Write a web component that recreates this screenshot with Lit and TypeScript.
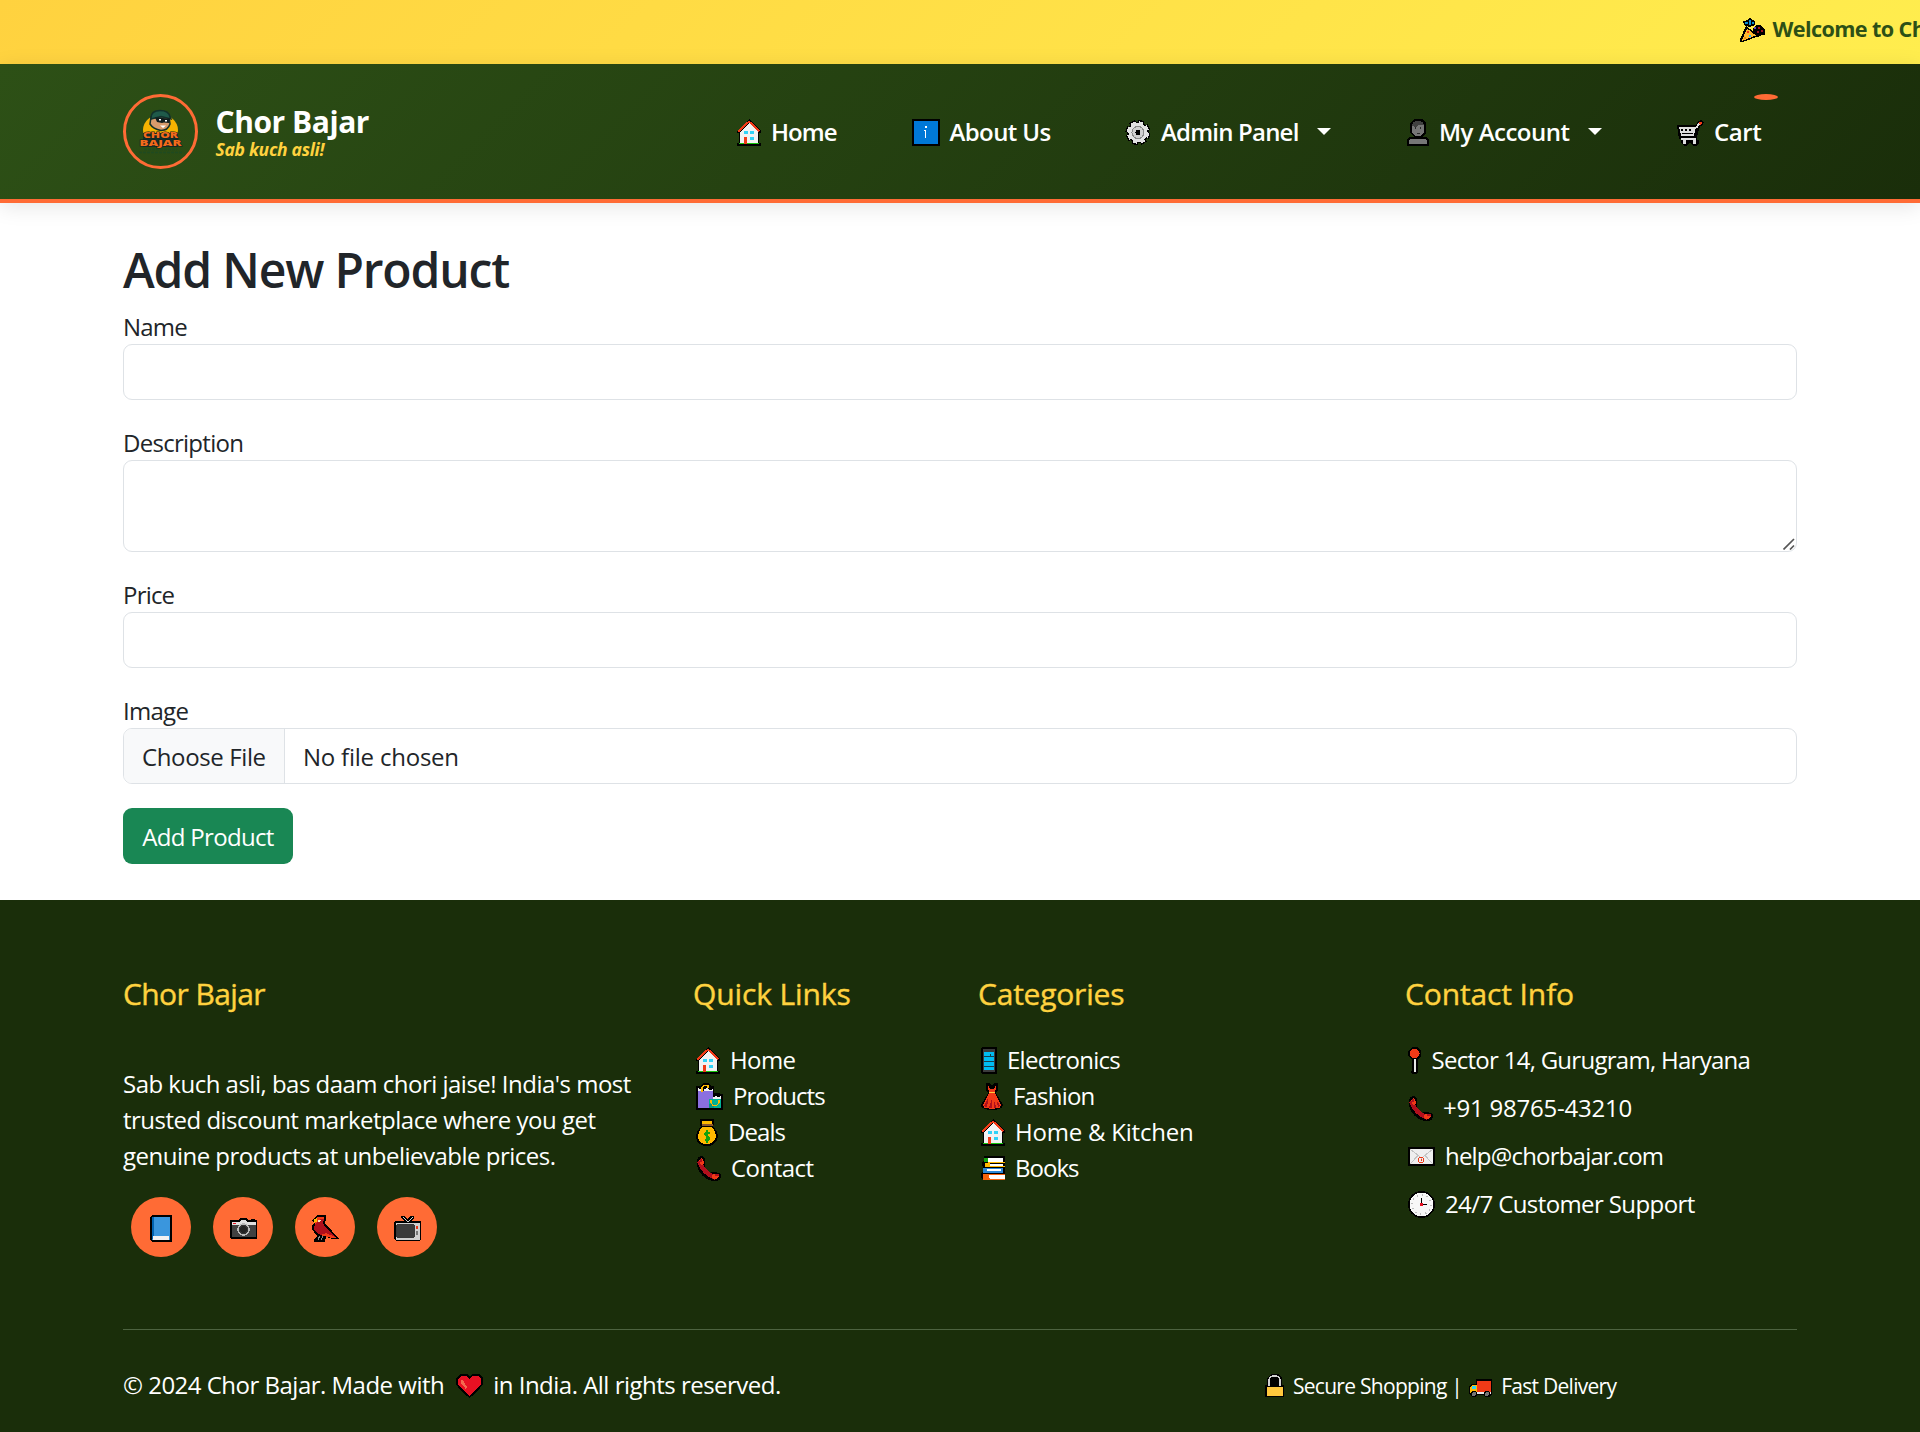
import { LitElement, html, svg, css, type TemplateResult, type SVGTemplateResult } from "lit";
import { customElement } from "lit/decorators.js";

type Glyph = { w: number; h: number; art: SVGTemplateResult };
type Row = { icon: string; text: string; track: string };

const house = svg`
  <path d="M12 0L24 12V14H22V24H24V27H0V24H2V14H0V12Z" fill="#000"/>
  <path d="M12 4L21 13V24H3V13Z" fill="#f2f2f2"/>
  <path d="M1.5 12.5L12 2.5L22.5 12.5" fill="none" stroke="#f03a17" stroke-width="2"/>
  <path d="M7 11.5h3.5v3H7zM13 11.5h4v3h-4zM13 18h4v3h-4z" fill="#31d2f7"/>
  <path d="M2 24h20v1.3H2z" fill="#16c60c"/><path d="M7 17.5h3.4V25H7z" fill="#f03a17"/>`;

const handset = svg`
  <path d="M1 4Q2 0 6 0Q9 1 9 4V8Q10 11 8 12Q11 17 14 18Q16 15 19 16L25 18V21Q24 25 19 25Q9 25 3 15Q0 9 1 4Z" fill="#000"/>
  <path d="M3 5Q8 18 20 22" fill="none" stroke="#b00f1c" stroke-width="4.5"/>
  <path d="M3 4L6 2L7.5 5V8L5 9.5Z" fill="#f03a17"/>
  <path d="M15.5 20L18 18L23.5 19L21 23H17Z" fill="#f03a17"/>
  <path d="M4 3h2v3H4zM19 17.6l4 1v1.5h-4z" fill="#b00f1c"/>`;

const GLYPHS: Record<string, Glyph> = {
  home: { w: 24, h: 27, art: house },
  phone: { w: 25, h: 25, art: handset },
  party: { w: 25, h: 25, art: svg`
    <path d="M6 9L19 19L3 25H0V22Z" fill="#000"/><path d="M7 11.5L16 18.5L3 23.5H2Z" fill="#ffb92e"/>
    <path d="M3 4L8 3L10 0L12 3L15 4V8L9 10L4 8Z" fill="#000"/><path d="M5 5h3v2H5zM9 2.5h2v5H9zM12 5h2v2h-2z" fill="#0a8fd6"/>
    <path d="M13 11L17 8H20L25 13V18H22L18 20L13 16Z" fill="#000"/><path d="M18 10h2v2h-2zM21 13h2v2h-2zM17 14h2v2h-2z" fill="#a4161f"/>
    <path d="M14 10h2v2h-2z" fill="#5b4bc4"/><path d="M7 14h2v2H7z" fill="#f03a17"/><path d="M9 18h2v2H9z" fill="#31b6f7"/><path d="M4 20h2v2H4z" fill="#e88e10"/>` },
  info: { w: 27.5, h: 27, art: svg`
    <path d="M0 0h27.5v27H0z" fill="#000"/><path d="M2 2h23.5v23H2z" fill="#0078d7"/>
    <path d="M13 7h1.6v1.6H13zM12 11h2.4v7.5H13V12h-1z" fill="#fff"/>` },
  gear: { w: 26, h: 25, art: svg`
    <circle cx="13" cy="12.5" r="10.8" fill="#000"/><circle cx="13" cy="12.5" r="10.9" fill="none" stroke="#000" stroke-width="3.4" stroke-dasharray="5.8 2.76"/>
    <circle cx="13" cy="12.5" r="9.6" fill="#e2e2e2"/><circle cx="13" cy="12.5" r="10" fill="none" stroke="#e2e2e2" stroke-width="2.4" stroke-dasharray="4.6 3.25" stroke-dashoffset="-.6"/>
    <circle cx="13" cy="12.5" r="6" fill="#d0d0d0" stroke="#8a8a8a" stroke-width="1"/><circle cx="13" cy="12.5" r="2.5" fill="#000"/>` },
  person: { w: 22, h: 27, art: svg`
    <path d="M7 0H15L19 4V14L15 18H19L22 20V27H0V20L3 18H8L3 14V4Z" fill="#000"/>
    <path d="M5 6H17V13L14 17H8L5 13ZM2 21L4 19.5H18L20 21V25H2Z" fill="#767676"/>
    <path d="M5 7L6 3L11 1.6L16 3L17 6H11L9 8Z" fill="#414141"/><path d="M8 8h1.3v2.2H8zM13 8h1.3v2.2H13zM9.5 13.5h3.5v1H9.5z" fill="#2b2b2b"/>` },
  cart: { w: 27, h: 26, art: svg`
    <path d="M0 5H19L21 1L24 0L27 2L26 5L23 6L20 17V20H22V23L19 26H16L14 23H12L10 26H7L4 23V19H2Z" fill="#000"/>
    <path d="M2 6.5H19L17 15.500H4Z" fill="#dedede"/><path d="M4 8.500h2v2H4zM8 8.500h2v2H8zM12 8.500h2v2h-2zM5 12.500h11v1H5z" fill="#000"/>
    <path d="M19 8L22.500 3M3.500 18.500H19" stroke="#dedede" stroke-width="2"/><path d="M6 20h3v4H6zM15.500 20h3v4h-3z" fill="#dedede"/><path d="M22 2h3v2l-2 1z" fill="#f03a17"/>` },
  bags: { w: 27, h: 27, art: svg`
    <path d="M0 3H4L7 0H12L15 3H18V10H20L27 11V27H0Z" fill="#000"/><path d="M2 8H17V25H2Z" fill="#8b6fe0"/>
    <path d="M2 5l2 1.5 2-1.5v3H2zM8 6.5L11 5l3 2 3-1v2H8z" fill="#f2f2f2"/><path d="M6 9V4Q8 1.8 12 2.6V5" fill="none" stroke="#ffb900" stroke-width="1.2"/>
    <path d="M12.5 16H25V25H12.5Z" fill="#00b294"/><path d="M17 14l3-1 2 1 3-1v3h-8z" fill="#f2f2f2"/><path d="M12.5 21h5v4h-5z" fill="#0a9480"/>
    <path d="M15 17V20Q19 26 23 20V17" fill="none" stroke="#ffb900" stroke-width="1.2"/>` },
  money: { w: 22, h: 27, art: svg`
    <path d="M4 0H18V5L17 8Q22 12 22 18Q20 27 11 27Q1 27 0 18Q0 12 5 8L4 5Z" fill="#000"/>
    <path d="M6 2H16V5H6ZM6 8H16Q20 13 20 18Q18 25 11 25Q3 25 2 18Q2 13 6 8Z" fill="#ffb900"/><path d="M6 5h10.500v2.400H6z" fill="#8e562e"/>
    <path d="M13.500 13.500H10Q7.500 15.500 11 17Q15 19 12 21H8.500M11 11V23.500" fill="none" stroke="#13a10e" stroke-width="2"/>` },
  mobile: { w: 16, h: 27, art: svg`
    <path d="M1 0h14l1 1v25l-1 1H1l-1-1V1z" fill="#000"/><path d="M2 2h12v23H2z" fill="#3b3b3b"/><path d="M3 5h10v17.500H3z" fill="#00bcf2"/>
    <path d="M3 9h10v1.200H3zM3 13.800h10V15H3zM3 18.500h10v1.200H3zM9 6.500h1.200V9H9z" fill="#17414d"/>` },
  dress: { w: 22, h: 27, art: svg`
    <path d="M5 0H9L11 3L13 0H17V7L15 10L22 22L21 25L14 27H8L1 25L0 22L7 10L5 7Z" fill="#000"/>
    <path d="M7 1.500L8.500 5L11 6.500L13.500 5L15 1.500V6L13.600 9.500L20 22L19 24.500L14 25.500H8L3 24.500L2 22L8.400 9.500L7 6Z" fill="#f03a17"/>
    <path d="M7.500 14L3 23L6 24.500ZM10.500 17V25H8ZM13 17V25H15.500ZM15.500 17L19 23L17 24.500Z" fill="#b00f1c"/><path d="M8 9h6v1.300H8z" fill="#ffc83d"/>` },
  books: { w: 24, h: 24, art: svg`
    <path d="M3 0H24V24H2L0 22V17L2 15V10H1V6L3 5Z" fill="#000"/><path d="M3 1.500H7V6H3Z" fill="#13a10e"/><path d="M7 1.500H22V6H7ZM9 7.500H22V10H9Z" fill="#fff"/>
    <path d="M7 6H24V7.300H7ZM7 9.800H24V11H7ZM4 6.500H9V11H4Z" fill="#ffb900"/><path d="M2 11.500H22V16.500H2Z" fill="#2b88d8"/><path d="M6 12.800H20V15.300H6Z" fill="#fff"/>
    <path d="M1.500 17.500H24V24H2Z" fill="#f7630c"/><path d="M9 18.500H24V22.500H9L7.500 20.500Z" fill="#fff"/>` },
  pin: { w: 13.5, h: 27, art: svg`
    <path d="M4 0H9.500L13 4V9L10 12.500V23L10.500 26L8 27H5L3 26L4 23V12.500L0 9V4Z" fill="#000"/>
    <circle cx="6.600" cy="6.500" r="5" fill="#f03a17"/><path d="M5.600 12h2.500v13H5.600z" fill="#e6e6e6"/>` },
  mail: { w: 27, h: 19, art: svg`
    <path d="M0 0h27v19H0z" fill="#000"/><path d="M2 2h23v15H2z" fill="#efefef"/>
    <path d="M2 2L13.500 11L25 2M2 17L10 8.500M25 17L17 8.500" fill="none" stroke="#c4c4c4" stroke-width="1"/>
    <circle cx="13" cy="13" r="2.800" fill="none" stroke="#f03a17" stroke-width="1"/><path d="M12.500 12h1.500v2h-1.500z" fill="#f03a17"/>` },
  clock: { w: 27, h: 27, art: svg`
    <circle cx="13.500" cy="13.500" r="13.500" fill="#000"/><circle cx="13.500" cy="13.500" r="11.800" fill="#f7f7f7"/>
    <circle cx="13.500" cy="13.500" r="9.600" fill="none" stroke="#bdbdbd" stroke-width="1.600" stroke-dasharray="1.200 3.826"/>
    <path d="M13 7h1.200v6H13zM15 13h4v1.200h-4z" fill="#000"/><path d="M12 12h3v3h-3z" fill="#e81123"/>` },
  book: { w: 22, h: 27, art: svg`
    <path d="M2 0H22V27H2L0 25V2Z" fill="#000"/><path d="M2 2H20V25H2Z" fill="#3a96dd"/><path d="M2 2H4V23L2 24Z" fill="#0063b1"/><path d="M3 21H19V25H3Z" fill="#f2f2f2"/>` },
  camera: { w: 27, h: 21, art: svg`
    <path d="M0 2H9L10 0H17L18 2H20L21 1H24L25 2H27V20L26 21H1L0 20Z" fill="#000"/><path d="M1.500 4H25.500V19H1.500Z" fill="#414141"/>
    <path d="M1.500 3.500H10L11 2H16L17 3.500H25.500V6.500H1.500Z" fill="#e0e0e0"/><circle cx="13.500" cy="11.500" r="5.600" fill="#333" stroke="#b8b8b8" stroke-width="1.300"/>
    <circle cx="13.500" cy="11.500" r="3.200" fill="#222"/><path d="M3 5h2.500v1.200H3z" fill="#e81123"/>` },
  bird: { w: 27, h: 27, art: svg`
    <path d="M5 0H14V5L13 8L27 24H20L14 22L13 27H2V24L5 21L0 14V10L2 8L0 6Z" fill="#000"/>
    <path d="M6 2H12.500L11 8L12 10L23 22H17L6 19L2 14L3 9L6 7Z" fill="#b00f1c"/><path d="M6 1.500H12.500L12 4L8 4L5 7L4 9H3L4 4ZM14 18L24 22.500H18L8 20Z" fill="#f03a17"/>
    <path d="M2 4.500L4.500 3V7L2 8Z" fill="#ffb900"/><path d="M6 4.500h3L8 7H6z" fill="#f7e3c0"/><path d="M7.500 21L6 25M11 21L9 25" stroke="#8a8a8a" stroke-width="1.200"/>` },
  tv: { w: 27, h: 25, art: svg`
    <path d="M7 0L10 0L13.500 3L17 0H20V2L17 5H26L27 6V23L25 25H2L0 23V6L1 5H10L7 2Z" fill="#000"/><path d="M1.500 6.500H25.500V23.500H1.500Z" fill="#d0d0d0"/>
    <path d="M9 1L14 6L19 1" fill="none" stroke="#d0d0d0" stroke-width="1.200"/><path d="M2.500 8.500H20V21H2.500Z" fill="#3b3b3b" stroke="#111" stroke-width=".8"/>
    <path d="M21.500 9.500h2.500v3h-2.500z" fill="#e8371a"/><path d="M21.500 15h2.500v3.500h-2.500z" fill="#767676"/>` },
  heart: { w: 27, h: 24, art: svg`
    <path d="M4 0H11L13.500 2.500L16 0H23L27 4V10L22 17L13.500 24L5 17L0 10V4Z" fill="#000"/>
    <path d="M5 2H10L13.500 5L17 2H22L25 5V10L20 16L13.500 22L7 16L2 10V5Z" fill="#e81123"/><path d="M4.500 5.500L7 6.500L11 13L9.500 14.500L5 9Z" fill="#f4694f"/>` },
  lock: { w: 19, h: 23, art: svg`
    <path d="M6 0H13L17 4V11H19V23H0V11H2V4Z" fill="#000"/><path d="M4 12V6Q4.500 2 9.500 2Q14.500 2 15 6V12" fill="#000" stroke="#d0d0d0" stroke-width="1.500"/>
    <path d="M1.500 12.500H17.500V21.500H1.500Z" fill="#ffc83d"/>` },
  truck: { w: 23, h: 18, art: svg`
    <path d="M7 0H23V16L20 18H16L15 16H8L6 18H3L0 15V8L2 5H7Z" fill="#000"/><path d="M8 1.500H22V13H8Z" fill="#f03a17"/>
    <path d="M1 9L3 6H8V14H1Z" fill="#ffb900"/><path d="M3.500 6.500H7V10H2.500Z" fill="#31d2f7"/><path d="M8 13H22V14.800H8Z" fill="#e6e6e6"/>
    <circle cx="5" cy="15" r="2.500" fill="#767676" stroke="#000"/><circle cx="18" cy="15" r="2.500" fill="#767676" stroke="#000"/>` },
};

const glyph = (name: string): TemplateResult => {
  const g = GLYPHS[name];
  return html`<svg class="glyph" width=${g.w} height=${g.h} viewBox="0 0 ${g.w} ${g.h}" shape-rendering="crispEdges" aria-hidden="true">${g.art}</svg>`;
};

const NAV: (Row & { caret?: boolean })[] = [
  { icon: "home", text: "Home", track: "t9" },
  { icon: "info", text: "About Us", track: "t6" },
  { icon: "gear", text: "Admin Panel", track: "t8", caret: true },
  { icon: "person", text: "My Account", track: "t5", caret: true },
  { icon: "cart", text: "Cart", track: "t4" },
];
const LINKS: Row[] = [
  { icon: "home", text: "Home", track: "t6" },
  { icon: "bags", text: "Products", track: "t10" },
  { icon: "money", text: "Deals", track: "t9" },
  { icon: "phone", text: "Contact", track: "t5" },
];
const CATEGORIES: Row[] = [
  { icon: "mobile", text: "Electronics", track: "t7" },
  { icon: "dress", text: "Fashion", track: "t8" },
  { icon: "home", text: "Home & Kitchen", track: "t2" },
  { icon: "books", text: "Books", track: "t10" },
];
const CONTACT: Row[] = [
  { icon: "pin", text: "Sector 14, Gurugram, Haryana", track: "t7" },
  { icon: "phone", text: "+91 98765-43210", track: "t2" },
  { icon: "mail", text: "help@chorbajar.com", track: "t8" },
  { icon: "clock", text: "24/7 Customer Support", track: "t6" },
];
const SOCIAL = ["book", "camera", "bird", "tv"];

@customElement("app-root")
export class AppRoot extends LitElement {
  static styles = css`
    :host { display: block; height: 1432px; overflow: hidden; background: #fff; color: #212529;
      font: 400 24px/36px "Open Sans", "Noto Sans", sans-serif; }
    * { box-sizing: border-box; }
    h1, h2, p, ul { margin: 0; padding: 0; list-style: none; }
    .glyph { display: block; flex: none; }
    .t1 { letter-spacing: -.12px; } .t2 { letter-spacing: -.22px; } .t4 { letter-spacing: -.4px; }
    .t5 { letter-spacing: -.51px; } .t6 { letter-spacing: -.6px; } .t7 { letter-spacing: -.72px; }
    .t8 { letter-spacing: -.8px; } .t9 { letter-spacing: -.95px; } .t10 { letter-spacing: -1px; }

    .banner { height: 64px; padding-top: 13px; overflow: hidden; background: linear-gradient(135deg, #ffd23f, #ffed4e); }
    .ticker { display: flex; align-items: center; gap: 7.5px; padding-left: 1740px; white-space: nowrap;
      font: 700 21.6px/32px "Open Sans", sans-serif; letter-spacing: -.6px; color: #2d5016; }
    .ticker .glyph { margin-top: 1px; }

    .bar { position: relative; display: flex; align-items: center; justify-content: space-between; height: 139px; padding: 0 123px;
      background: linear-gradient(135deg, #2d5016, #1a2e0a); border-bottom: 4px solid #ff6b35; box-shadow: 0 4px 20px rgba(0, 0, 0, .1); }
    .brand { display: flex; align-items: center; gap: 17.5px; }
    .crest { width: 75px; height: 75px; border: 3px solid #ff6b35; border-radius: 50%; }
    .crest svg { display: block; width: 69px; height: 69px; }
    .names { margin-top: 4px; }
    .name { font-weight: 700; font-size: 30px; line-height: 31px; letter-spacing: -.45px; color: #fff; }
    .motto { font-weight: 700; font-style: italic; font-size: 17.5px; line-height: 24px; letter-spacing: -.29px; color: #ffd23f; }
    nav { display: grid; grid-template-columns: 175px 213px 282px 270px 120px; }
    .item { position: relative; display: flex; align-items: center; height: 36px; color: #fff; font-weight: 600; white-space: nowrap; }
    .item .glyph { margin: 2px 10px 0 0; }
    .caret { margin: 0 0 1px 18.5px; border: 7px solid transparent; border-top-color: #fff; border-bottom: 0; }
    .badge { position: absolute; left: 77px; top: -20px; width: 24px; height: 6px; border-radius: 50%; background: #ff6b35; }

    main { height: 697px; padding: 38px 123px 0; }
    h1 { font-size: 48px; line-height: 58px; font-weight: 600; letter-spacing: -1.17px; margin-bottom: 9px; }
    .field { margin-bottom: 24px; }
    label { display: block; height: 36px; padding-top: 1px; line-height: 35px; }
    .control { display: block; width: 100%; height: 56px; margin: 0; padding: 9px 18px; font: inherit; color: inherit;
      background: #fff; border: 1px solid #dee2e6; border-radius: 9px; outline: 0; }
    .area { position: relative; }
    textarea.control { height: 92px; resize: none; }
    .grip { position: absolute; right: 2px; bottom: 2px; }
    .file { display: flex; padding: 0; overflow: hidden; }
    .file span { padding: 10px 18px 0; line-height: 35px; white-space: nowrap; }
    .file .pick { width: 161px; background: #f8f9fa; border-right: 1px solid #dee2e6; letter-spacing: -.38px; }
    .submit { display: block; width: 170px; height: 56px; padding: 1px 0 0; border: 0; border-radius: 9px; background: #198754; color: #fff;
      font: inherit; line-height: 35px; letter-spacing: -.69px; white-space: nowrap; }

    footer { height: 532px; padding: 76px 123px 0; background: #1a2e0a; color: #fff; }
    .cols { display: grid; grid-template-columns: 570px 285px 427px 1fr; height: 354px; border-bottom: 1px solid #4d6340; }
    h2 { font-size: 30px; line-height: 36px; font-weight: 500; color: #ffd23f; margin-bottom: 30px; white-space: nowrap;
      -webkit-text-stroke: .4px #ffd23f; }
    .blurb { padding-top: 24px; white-space: nowrap; }
    .blurb span { display: block; }
    .social { display: flex; gap: 22px; padding: 23px 0 0 8px; }
    .social a { display: grid; place-items: center; width: 60px; height: 60px; border-radius: 50%; background: #ff6b35; }
    .social .glyph { margin-top: 3px; }
    .row { display: flex; align-items: flex-start; height: 36px; line-height: 35px; white-space: nowrap; padding-left: 3px; }
    .row .glyph { align-self: center; margin-right: 10px; }
    .contact .row { margin-bottom: 12px; }
    .legal { display: grid; grid-template-columns: 1142px 1fr; padding-top: 37px; }
    .legal .row { padding-left: 0; }
    .legal .heart { margin: 0 10px 0 12px; align-self: center; }
    .legal .heart .glyph { margin: 0 0 -2px; }
    .seals { font-size: 21px; padding-top: 1px; }
    .seals .row { line-height: 36px; }
    .seals .glyph { margin: -2px 9px 0 0; }
    .seals .truck .glyph { margin: 4px 9px 0 7px; }
    .truck { align-self: center; }
  `;

  private rows(items: Row[]) {
    return items.map((r) => html`<li class="row">${glyph(r.icon)}<span class=${r.track}>${r.text}</span></li>`);
  }

  render() {
    return html`
      <div class="banner"><div class="ticker">${glyph("party")}<span>Welcome to Chor Bajar!</span></div></div>
      <header class="bar">
        <div class="brand">
          <div class="crest">
            <svg viewBox="0 0 69 69" aria-hidden="true">
              <ellipse cx="34.500" cy="33" rx="17.500" ry="15.500" fill="#f5b301"/>
              <path d="M17 36H52V50H17Z" fill="#12312b"/>
              <path d="M25 20H43L44 27Q42 33.500 35 33.500Q27 32 24 27Z" fill="#d89b6c" stroke="#12312b" stroke-width="1.500"/>
              <path d="M25 21Q25 13.500 34 13.500Q43 13.500 44 20L45 22L35 19.500L25 22Z" fill="#1f5a4a" stroke="#12312b" stroke-width="1.500"/>
              <path d="M29 20.500L44 21.500L43 26L38 25.500L36 26L31 25Z" fill="#111c1c"/>
              <path d="M33 22h2v1.500h-2zM39 23h2v1.500h-2zM34 28.500l6 0-3 2.500z" fill="#fff"/>
              <text x="34.500" y="41" text-anchor="middle" textLength="35" lengthAdjust="spacingAndGlyphs" font-family="Open Sans" font-weight="800" font-size="9" fill="#f26a1b" stroke="#12231c" stroke-width="1" paint-order="stroke">CHOR</text>
              <text x="34.500" y="48.500" text-anchor="middle" textLength="42" lengthAdjust="spacingAndGlyphs" font-family="Open Sans" font-weight="800" font-size="8.500" fill="#f26a1b" stroke="#12231c" stroke-width="1" paint-order="stroke">BAJAR</text>
              <path d="M18 52.500H51M13 55.500H56" stroke="#1f4a20" stroke-width="1.300" stroke-dasharray="3 1"/>
            </svg>
          </div>
          <div class="names"><div class="name">Chor Bajar</div><div class="motto">Sab kuch asli!</div></div>
        </div>
        <nav>
          ${NAV.map((n) => html`<a class="item">${glyph(n.icon)}<span class=${n.track}>${n.text}</span>
            ${n.caret ? html`<i class="caret"></i>` : ""}${n.icon === "cart" ? html`<i class="badge"></i>` : ""}</a>`)}
        </nav>
      </header>
      <main>
        <h1>Add New Product</h1>
        <div class="field"><label class="t8">Name</label><input class="control" type="text"></div>
        <div class="field"><label class="t7">Description</label>
          <div class="area"><textarea class="control"></textarea>
            <svg class="grip" width="12" height="12" viewBox="0 0 12 12"><path d="M.500 11.500L11 1M7 11.500L11 7.500" stroke="#555" stroke-width="1.700" fill="none"/></svg></div></div>
        <div class="field"><label class="t8">Price</label><input class="control" type="text"></div>
        <div class="field"><label class="t7">Image</label>
          <div class="control file"><span class="pick">Choose File</span><span class="t2">No file chosen</span></div></div>
        <button class="submit">Add Product</button>
      </main>
      <footer>
        <div class="cols">
          <section>
            <h2 class="t6">Chor Bajar</h2>
            <p class="blurb"><span class="t5">Sab kuch asli, bas daam chori jaise! India's most</span>
              <span class="t5">trusted discount marketplace where you get</span>
              <span class="t5">genuine products at unbelievable prices.</span></p>
            <div class="social">${SOCIAL.map((s) => html`<a>${glyph(s)}</a>`)}</div>
          </section>
          <section><h2 class="t1">Quick Links</h2><ul>${this.rows(LINKS)}</ul></section>
          <section><h2 class="t2">Categories</h2><ul>${this.rows(CATEGORIES)}</ul></section>
          <section><h2 class="t1">Contact Info</h2><ul class="contact">${this.rows(CONTACT)}</ul></section>
        </div>
        <div class="legal">
          <div class="row"><span class="t5">© 2024 Chor Bajar. Made with</span><span class="heart">${glyph("heart")}</span><span class="t5">in India. All rights reserved.</span></div>
          <div class="seals"><div class="row">${glyph("lock")}<span class="t7">Secure Shopping |</span><span class="truck">${glyph("truck")}</span><span class="t7">Fast Delivery</span></div></div>
        </div>
      </footer>`;
  }
}
